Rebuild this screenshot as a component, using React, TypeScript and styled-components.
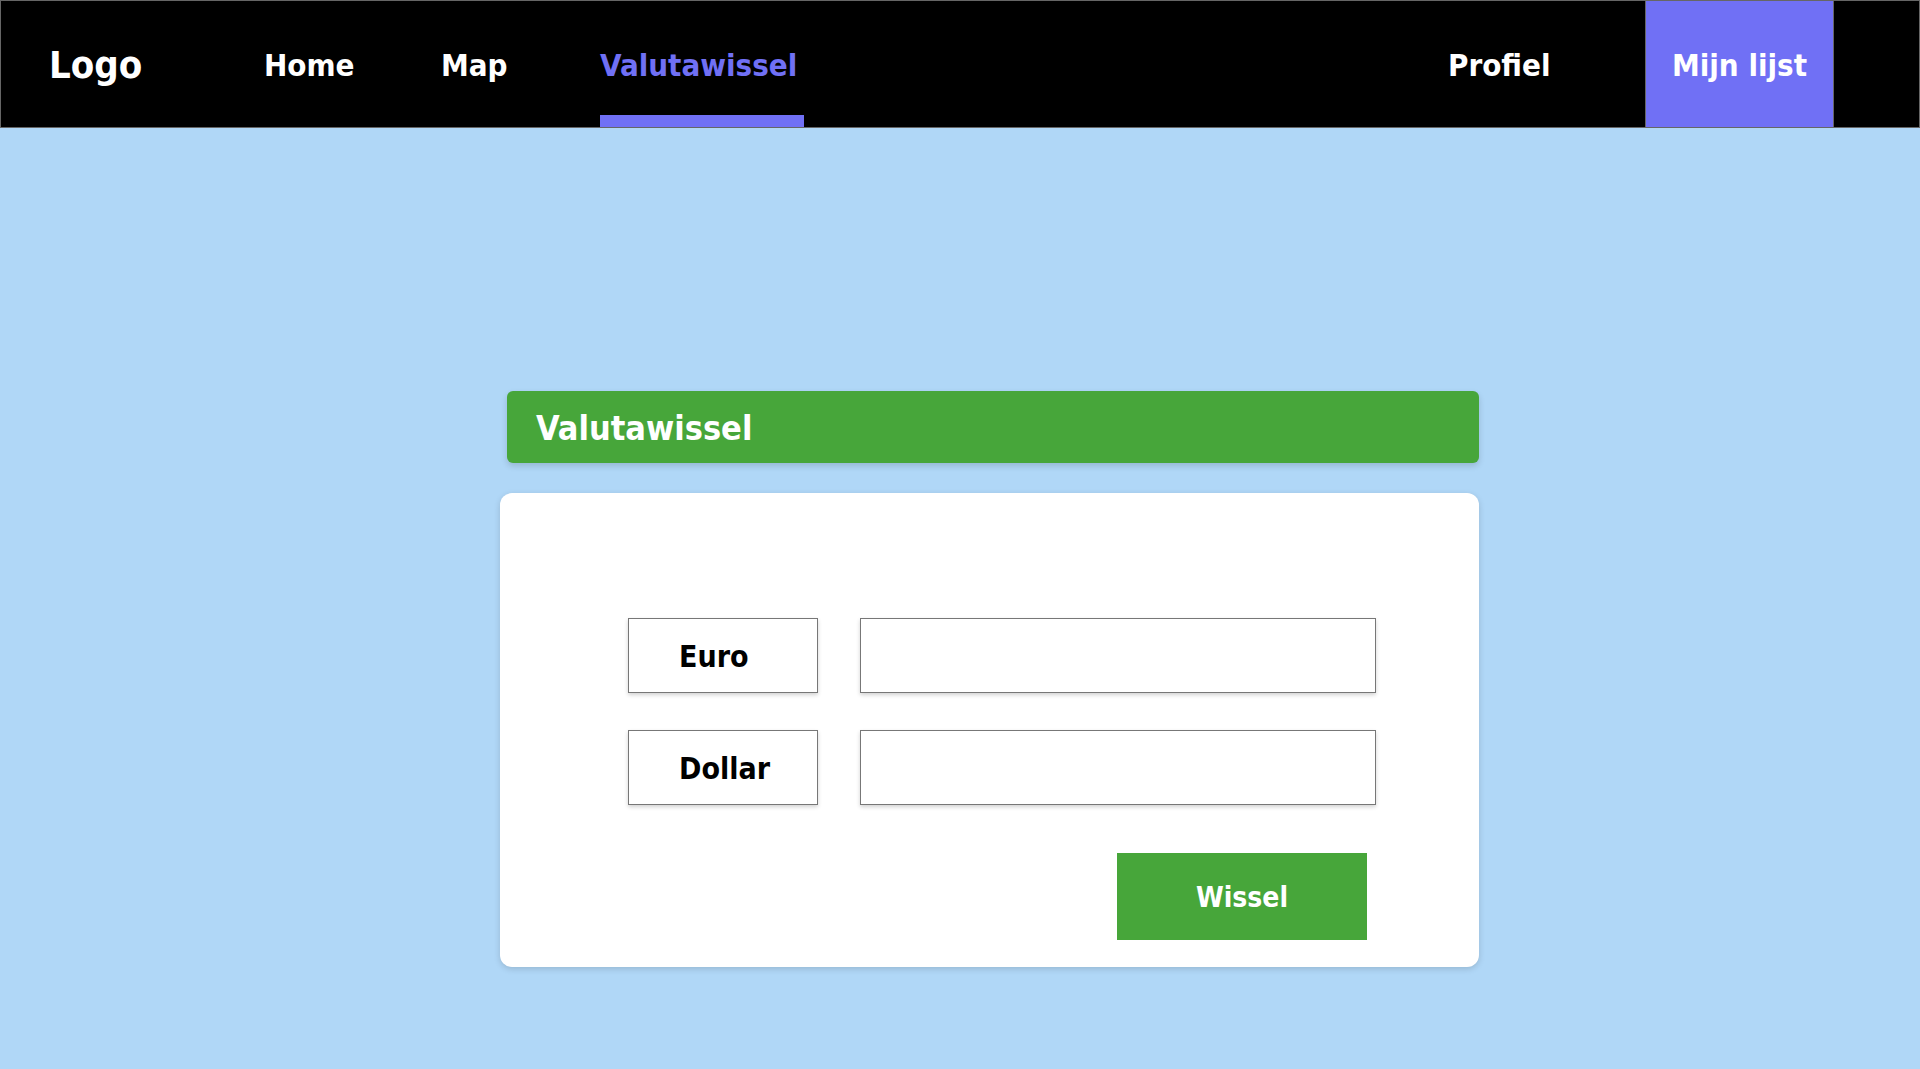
import React from "react";
import styled, { createGlobalStyle } from "styled-components";

const GlobalStyle = createGlobalStyle`
  html, body {
    margin: 0;
    padding: 0;
    background: #b0d7f7;
    min-height: 100%;
  }
  * { box-sizing: border-box; }
  body {
    font-family: "DejaVu Sans Condensed", "DejaVu Sans", sans-serif;
    font-stretch: condensed;
  }
`;

const Page = styled.div`
  min-height: 100vh;
  background: #b0d7f7;
  display: flex;
  flex-direction: column;
`;

const NavBar = styled.nav`
  height: 128px;
  background: #000;
  border: 1px solid #666;
  display: flex;
  align-items: stretch;
  padding-left: 48px;
  padding-right: 85px;
`;

const NavGroup = styled.div`
  display: flex;
  align-items: stretch;
`;

const Spacer = styled.div`
  flex: 1;
`;

const LogoText = styled.div`
  width: 215px;
  display: flex;
  align-items: center;
  color: #fff;
  font-weight: 700;
  font-size: 38px;
  padding-top: 2px;
`;

const NavLink = styled.a<{ $w: number; $active?: boolean }>`
  position: relative;
  width: ${(p) => p.$w}px;
  display: flex;
  align-items: center;
  color: ${(p) => (p.$active ? "#7070f5" : "#fff")};
  font-weight: 700;
  font-size: 31px;
  padding-top: 2px;
  text-decoration: none;
  cursor: pointer;
`;

const Underline = styled.span`
  position: absolute;
  left: 0;
  bottom: 0;
  width: 204px;
  height: 12px;
  background: #7070f5;
`;

const ListButton = styled.a`
  width: 189px;
  display: flex;
  align-items: center;
  justify-content: center;
  background: #7070f5;
  border-left: 1px solid #666;
  border-right: 1px solid #666;
  color: #fff;
  font-weight: 700;
  font-size: 31px;
  padding-top: 2px;
  text-decoration: none;
  cursor: pointer;
`;

const Main = styled.main`
  padding: 263px 0 0 500px;
`;

const Converter = styled.section`
  width: 979px;
  display: flex;
  flex-direction: column;
  gap: 30px;
`;

const CardHeader = styled.h1`
  margin: 0 0 0 7px;
  height: 72px;
  background: #47a63a;
  border-radius: 6px;
  box-shadow: 0 3px 6px rgba(0, 0, 0, 0.15);
  color: #fff;
  font-size: 34px;
  font-weight: 700;
  display: flex;
  align-items: center;
  padding-left: 29px;
  padding-top: 2px;
`;

const CardBody = styled.div`
  background: #fff;
  border-radius: 12px;
  box-shadow: 0 2px 6px rgba(0, 0, 0, 0.15);
  padding: 125px 0 27px 128px;
  display: flex;
  flex-direction: column;
`;

const FieldGrid = styled.div`
  display: grid;
  grid-template-columns: 190px 516px;
  column-gap: 42px;
  row-gap: 37px;
`;

const CurrencyLabel = styled.label`
  height: 75px;
  border: 1px solid #777;
  box-shadow: 0 2px 4px rgba(0, 0, 0, 0.18);
  background: #fff;
  display: flex;
  align-items: center;
  padding-left: 50px;
  padding-top: 2px;
  color: #000;
  font-weight: 700;
  font-size: 30px;
`;

const AmountInput = styled.input`
  height: 75px;
  border: 1px solid #777;
  box-shadow: 0 2px 4px rgba(0, 0, 0, 0.18);
  background: #fff;
  font-family: inherit;
  font-size: 26px;
  padding: 0 16px;
  outline: none;
`;

const Actions = styled.div`
  width: 748px;
  display: flex;
  justify-content: flex-end;
  padding-right: 9px;
  margin-top: 48px;
`;

const SwapButton = styled.button`
  width: 250px;
  height: 87px;
  border: none;
  background: #47a63a;
  color: #fff;
  font-family: inherit;
  font-stretch: condensed;
  font-weight: 700;
  font-size: 28px;
  padding-top: 3px;
  cursor: pointer;
`;

export default function App() {
  return (
    <Page>
      <GlobalStyle />
      <NavBar>
        <NavGroup>
          <LogoText>Logo</LogoText>
          <NavLink $w={177}>Home</NavLink>
          <NavLink $w={159}>Map</NavLink>
          <NavLink $w={204} $active>
            Valutawissel
            <Underline />
          </NavLink>
        </NavGroup>
        <Spacer />
        <NavGroup>
          <NavLink $w={197}>Profiel</NavLink>
          <ListButton>Mijn lijst</ListButton>
        </NavGroup>
      </NavBar>
      <Main>
        <Converter>
          <CardHeader>Valutawissel</CardHeader>
          <CardBody>
            <FieldGrid>
              <CurrencyLabel htmlFor="euro">Euro</CurrencyLabel>
              <AmountInput id="euro" type="text" />
              <CurrencyLabel htmlFor="dollar">Dollar</CurrencyLabel>
              <AmountInput id="dollar" type="text" />
            </FieldGrid>
            <Actions>
              <SwapButton>Wissel</SwapButton>
            </Actions>
          </CardBody>
        </Converter>
      </Main>
    </Page>
  );
}
